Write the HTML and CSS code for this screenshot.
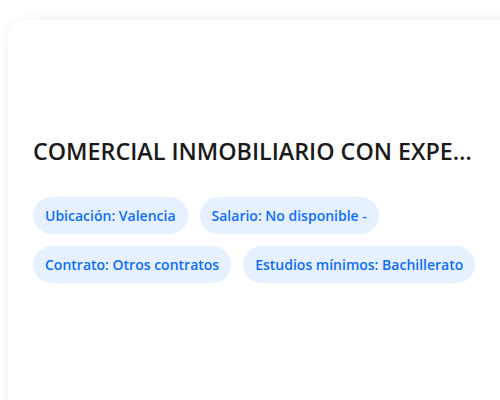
FILE: index.html
```html
<!DOCTYPE html>
<html lang="es">
<head>
<meta charset="utf-8">
<title>Oferta de empleo</title>
<link rel="stylesheet" href="styles.css">
</head>
<body>
  <article class="job-card">
    <h2 class="job-title">COMERCIAL INMOBILIARIO CON EXPERIENCIA EN VENTA DE VIVIENDAS</h2>
    <ul class="job-tags">
      <li class="tag">Ubicación: Valencia</li>
      <li class="tag">Salario: No disponible -</li>
      <li class="tag">Contrato: Otros contratos</li>
      <li class="tag">Estudios mínimos: Bachillerato</li>
    </ul>
  </article>
</body>
</html>
```

FILE: styles.css
```css
html, body {
  margin: 0;
  height: 100%;
  overflow: hidden;
  background: #ffffff;
}

body {
  padding: 20px 0 0 8px;
  box-sizing: border-box;
  font-family: "Open Sans", "Noto Sans", sans-serif;
}

.job-card {
  width: 520px;
  height: 420px;
  box-sizing: border-box;
  padding: 114px 40px 0 25px;
  background: #ffffff;
  border-radius: 16px;
  box-shadow: 0 0 12px rgba(0, 0, 0, 0.06);
}

.job-title {
  margin: 0 0 29px;
  max-width: 448px;
  font-size: 23.3px;
  font-weight: 600;
  line-height: 34px;
  color: #1a1a1a;
  white-space: nowrap;
  overflow: hidden;
  text-overflow: ellipsis;
}

.job-tags {
  list-style: none;
  margin: 0;
  padding: 0;
  display: flex;
  flex-wrap: wrap;
  gap: 12px;
  max-width: 445px;
}

.tag {
  padding: 0 12px;
  height: 37px;
  display: flex;
  align-items: center;
  border-radius: 19px;
  background: #e7f0fe;
  color: #0d6efd;
  font-size: 14px;
  font-weight: 600;
}
```
